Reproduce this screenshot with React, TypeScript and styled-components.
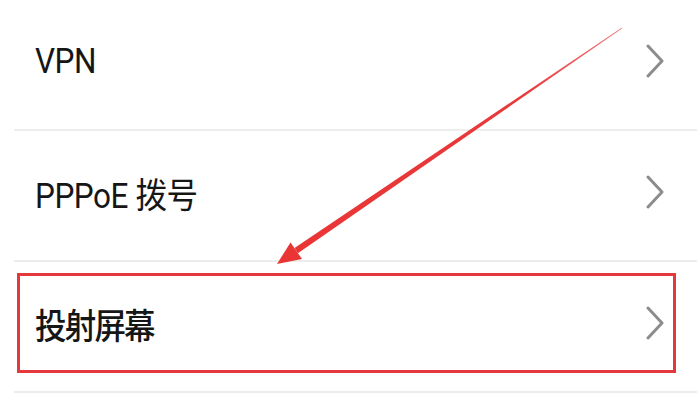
import React from 'react';
import styled, {createGlobalStyle} from 'styled-components';

const GlobalStyle = createGlobalStyle`
  html, body {
    margin: 0;
    padding: 0;
    background: #ffffff;
  }
  body {
    font-family: Roboto, "Noto Sans CJK SC", sans-serif;
  }
`

type ItemProps = {
    title: string
    highlight?: boolean
}

const Page = styled.div`
  position: relative;
  width: 697px;
  height: 401px;
  overflow: hidden;
  background: #ffffff;
`

const List = styled.ul`
  list-style: none;
  margin: 0;
  padding: 0;
`

const Item = styled.li`
  margin-left: 14px;
  border-bottom: 2px solid #ededed;
  padding-top: 11px;
  height: 118px;
`

const Frame = styled.div<{ $highlight?: boolean }>`
  box-sizing: border-box;
  height: 100px;
  margin: 0 21px 0 3px;
  padding: 0 8px 0 15px;
  display: flex;
  align-items: center;
  justify-content: space-between;
  border: 3px solid ${props => props.$highlight ? '#e5383e' : 'transparent'};
`

const Title = styled.span<{ $bold?: boolean }>`
  display: inline-block;
  color: #161616;
  font-size: 35px;
  font-weight: ${props => props.$bold ? 500 : 400};
  letter-spacing: ${props => props.$bold ? '-2px' : '-0.5px'};
  transform: scaleX(0.9);
  transform-origin: left center;
  white-space: nowrap;
`

const Chevron = styled.svg`
  width: 20px;
  height: 34px;
  flex: none;
`

const Annotation = styled.svg`
  position: absolute;
  left: 0;
  top: 0;
  pointer-events: none;
`

const SettingItem = (props: ItemProps) => {
    return (
        <Item>
            <Frame $highlight={props.highlight}>
                <Title $bold={props.highlight}>{props.title}</Title>
                <Chevron viewBox="0 0 20 34">
                    <path d="M3 2 L17 17 L3 32" fill="none" stroke="#8c8c8c" strokeWidth="3"
                          strokeLinecap="round" strokeLinejoin="round"/>
                </Chevron>
            </Frame>
        </Item>
    );
};

export default function App() {
    return (
        <Page>
            <GlobalStyle/>
            <List>
                <SettingItem title={'VPN'}/>
                <SettingItem title={'PPPoE 拨号'}/>
                <SettingItem title={'投射屏幕'} highlight/>
            </List>
            <Annotation width="697" height="401" viewBox="0 0 697 401">
                <defs>
                    <linearGradient id="fade" x1="622" y1="28" x2="296" y2="251" gradientUnits="userSpaceOnUse">
                        <stop offset="0" stopColor="#f07a7c"/>
                        <stop offset="0.3" stopColor="#e8393b"/>
                        <stop offset="1" stopColor="#ea3535"/>
                    </linearGradient>
                </defs>
                <polygon points="622.4,28.3 621.6,27.7 294.5,248 297.9,253.2" fill="url(#fade)"/>
                <polygon points="277,264 290.5,242.5 302,259" fill="#ea3535"/>
            </Annotation>
        </Page>
    );
}
